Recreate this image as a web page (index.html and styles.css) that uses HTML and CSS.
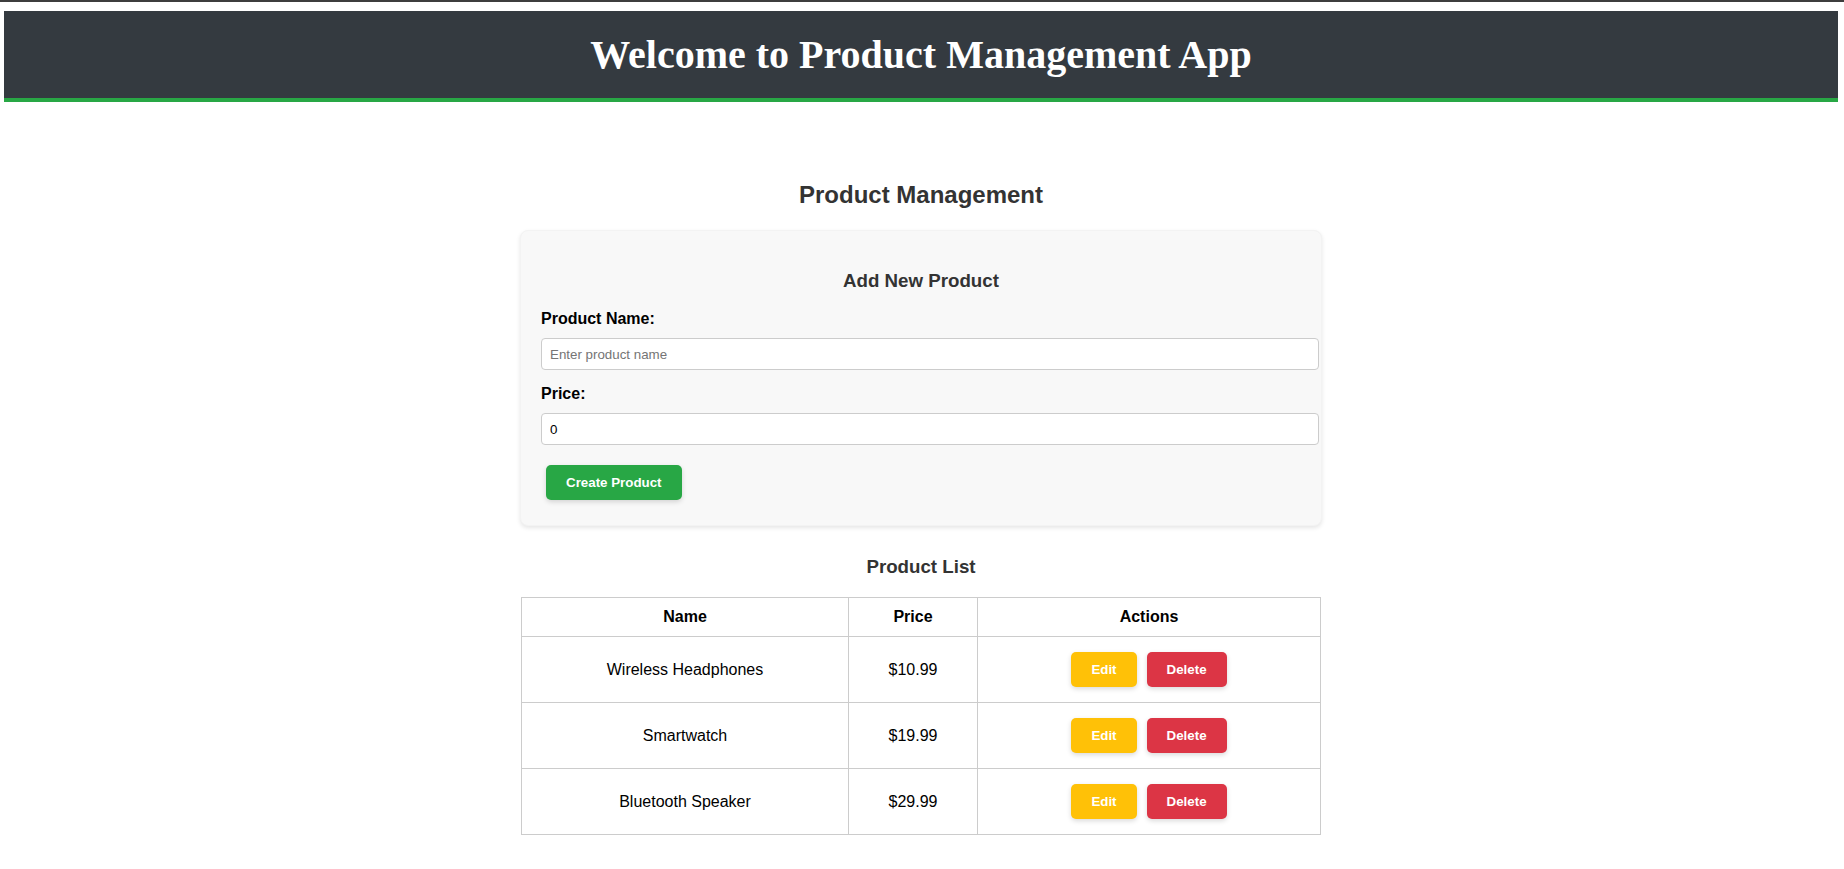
FILE: index.html
```html
<!DOCTYPE html>
<html lang="en">
<head>
<meta charset="utf-8">
<title>Product Management App</title>
<link rel="stylesheet" href="styles.css">
</head>
<body>
<div class="topline"></div>
<header class="app-header">
  <h1 class="app-title">Welcome to Product Management App</h1>
</header>
<main class="main">
  <div class="container">
    <h2 class="page-title">Product Management</h2>
    <section class="card">
      <h3 class="section-title">Add New Product</h3>
      <form class="product-form">
        <label class="field-label" for="name">Product Name:</label>
        <input class="field-input" id="name" type="text" placeholder="Enter product name">
        <label class="field-label" for="price">Price:</label>
        <input class="field-input" id="price" type="number" value="0">
        <button type="button" class="btn btn-create">Create Product</button>
      </form>
    </section>
    <h3 class="section-title">Product List</h3>
    <table class="product-table">
      <thead>
        <tr><th class="col-name">Name</th><th class="col-price">Price</th><th>Actions</th></tr>
      </thead>
      <tbody>
        <tr>
          <td>Wireless Headphones</td><td>$10.99</td>
          <td><button type="button" class="btn btn-edit">Edit</button><button type="button" class="btn btn-delete">Delete</button></td>
        </tr>
        <tr>
          <td>Smartwatch</td><td>$19.99</td>
          <td><button type="button" class="btn btn-edit">Edit</button><button type="button" class="btn btn-delete">Delete</button></td>
        </tr>
        <tr>
          <td>Bluetooth Speaker</td><td>$29.99</td>
          <td><button type="button" class="btn btn-edit">Edit</button><button type="button" class="btn btn-delete">Delete</button></td>
        </tr>
      </tbody>
    </table>
  </div>
</main>
</body>
</html>
```
FILE: styles.css
```css
html, body {
  margin: 0;
  padding: 0;
  background: #fff;
}
body {
  padding: 0 6px 40px 4px;
  font-family: "Liberation Sans", Arial, sans-serif;
  color: #000;
}
.topline {
  height: 2px;
  margin: 0 -6px 0 -4px;
  background: #3d3d3d;
}
.app-header {
  margin-top: 9px;
  background: #343a40;
  border-bottom: 4px solid #28a745;
  padding: 20px 0;
  text-align: center;
}
.app-title {
  margin: 0;
  font-family: "Liberation Serif", "Times New Roman", serif;
  font-size: 40px;
  line-height: 47px;
  font-weight: bold;
  color: #fff;
}
.main {
  padding-top: 79px;
}
.container {
  width: 800px;
  margin: 0 auto;
}
.page-title {
  margin: 0 0 21px;
  text-align: center;
  font-size: 24px;
  color: #333;
}
.card {
  margin: 0 -1px 30px;
  padding: 20px;
  background: #f8f8f8;
  border: 1px solid #f3f3f3;
  border-radius: 8px;
  box-shadow: 0 2px 4px rgba(0, 0, 0, 0.1);
}
.section-title {
  margin: 18.72px 0;
  text-align: center;
  font-size: 18.72px;
  color: #333;
}
.product-form {
  display: flex;
  flex-direction: column;
  align-items: flex-start;
}
.field-label {
  display: block;
  margin-bottom: 10px;
  font-weight: bold;
  font-size: 16px;
}
.field-input {
  box-sizing: border-box;
  width: calc(100% + 18px);
  height: 32px;
  margin: 0 0 15px;
  padding: 0 8px;
  border: 1px solid #ccc;
  border-radius: 4px;
  background: #fff;
  font-family: "Liberation Sans", Arial, sans-serif;
  font-size: 13.33px;
  color: #000;
}
.field-input::placeholder {
  color: #757575;
}
.btn {
  margin: 5px;
  padding: 10px 20px;
  border: none;
  border-radius: 5px;
  color: #fff;
  font-family: "Liberation Sans", Arial, sans-serif;
  font-size: 13.33px;
  line-height: 15px;
  font-weight: bold;
  box-shadow: 0 2px 5px rgba(0, 0, 0, 0.15);
  cursor: pointer;
}
.btn-create {
  background: #28a745;
}
.btn-edit {
  background: #ffc107;
}
.btn-delete {
  background: #dc3545;
}
.product-table {
  width: 800px;
  border-collapse: collapse;
  font-size: 16px;
}
.product-table th,
.product-table td {
  border: 1px solid #ccc;
  padding: 10px;
  text-align: center;
  line-height: 18px;
}
.product-table th {
  font-weight: bold;
}
.col-name {
  width: 306px;
}
.col-price {
  width: 108px;
}
```
